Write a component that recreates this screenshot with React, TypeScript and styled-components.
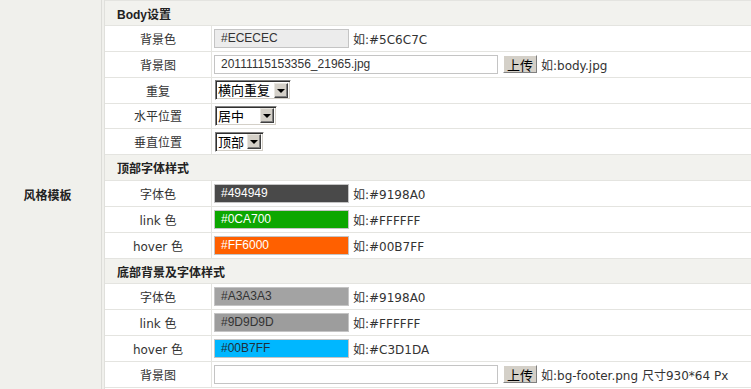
import React, { FC } from 'react';
import styled, { createGlobalStyle } from 'styled-components';

const GlobalStyle = createGlobalStyle`
  html, body {
    margin: 0;
    padding: 0;
    background: #ffffff;
    overflow: hidden;
  }
`;

type RowData =
  | { label: string; kind: 'color'; value: string; bg: string; fg: string; hint: string }
  | { label: string; kind: 'file'; value: string; hint: string }
  | { label: string; kind: 'select'; value: string; width: number };

interface SectionData {
  title: string;
  rows: RowData[];
}

const sections: SectionData[] = [
  {
    title: 'Body设置',
    rows: [
      { label: '背景色', kind: 'color', value: '#ECECEC', bg: '#ECECEC', fg: '#333333', hint: '如:#5C6C7C' },
      { label: '背景图', kind: 'file', value: '20111115153356_21965.jpg', hint: '如:body.jpg' },
      { label: '重复', kind: 'select', value: '横向重复', width: 76 },
      { label: '水平位置', kind: 'select', value: '居中', width: 62 },
      { label: '垂直位置', kind: 'select', value: '顶部', width: 49 },
    ],
  },
  {
    title: '顶部字体样式',
    rows: [
      { label: '字体色', kind: 'color', value: '#494949', bg: '#494949', fg: '#ffffff', hint: '如:#9198A0' },
      { label: 'link 色', kind: 'color', value: '#0CA700', bg: '#0CA700', fg: '#ffffff', hint: '如:#FFFFFF' },
      { label: 'hover 色', kind: 'color', value: '#FF6000', bg: '#FF6000', fg: '#ffffff', hint: '如:#00B7FF' },
    ],
  },
  {
    title: '底部背景及字体样式',
    rows: [
      { label: '字体色', kind: 'color', value: '#A3A3A3', bg: '#A3A3A3', fg: '#333333', hint: '如:#9198A0' },
      { label: 'link 色', kind: 'color', value: '#9D9D9D', bg: '#9D9D9D', fg: '#333333', hint: '如:#FFFFFF' },
      { label: 'hover 色', kind: 'color', value: '#00B7FF', bg: '#00B7FF', fg: '#1f2f3a', hint: '如:#C3D1DA' },
      { label: '背景图', kind: 'file', value: '', hint: '如:bg-footer.png 尺寸930*64 Px' },
    ],
  },
];

const ValueCell: FC<{ row: RowData }> = ({ row }) => {
  switch (row.kind) {
    case 'color':
      return (
        <Value>
          <ColorInput bg={row.bg} fg={row.fg}>{row.value}</ColorInput>
          <Hint>{row.hint}</Hint>
        </Value>
      );
    case 'file':
      return (
        <Value>
          <FileInput>{row.value}</FileInput>
          <UploadButton>上传</UploadButton>
          <Hint>{row.hint}</Hint>
        </Value>
      );
    default:
      return (
        <Value>
          <SelectBox style={{ width: row.width }}>
            <SelectText>{row.value}</SelectText>
            <ArrowButton>
              <Arrow />
            </ArrowButton>
          </SelectBox>
        </Value>
      );
  }
};

export default function App() {
  return (
    <>
      <GlobalStyle />
      <Page>
        <SideCell>风格模板</SideCell>
        <Panel>
          {sections.map((section, si) => (
            <React.Fragment key={section.title}>
              <SectionHeader first={si === 0}>{section.title}</SectionHeader>
              {section.rows.map((row, ri) => (
                <Row key={ri}>
                  <Label>{row.label}</Label>
                  <ValueCell row={row} />
                </Row>
              ))}
            </React.Fragment>
          ))}
        </Panel>
      </Page>
    </>
  );
}

const Page = styled.div`
  display: flex;
  width: 751px;
  height: 389px;
  background: #f0f0ec;
  font-family: 'DejaVu Sans', 'Noto Sans CJK SC', sans-serif;
  font-size: 12px;
  color: #333333;
`;

const SideCell = styled.div`
  width: 102px;
  flex: none;
  box-sizing: border-box;
  border-right: 1px solid #dcdcd8;
  display: flex;
  align-items: center;
  justify-content: center;
  padding-right: 6px;
  font-family: 'Liberation Sans', 'Noto Sans CJK SC', sans-serif;
  font-weight: bold;
  font-size: 12px;
  color: #222222;
`;

const Panel = styled.div`
  flex: 1;
  margin-left: 2px;
  border-left: 1px solid #e0e0dc;
  background: #ffffff;
  display: flex;
  flex-direction: column;
`;

const SectionHeader = styled.div<{ first: boolean }>`
  box-sizing: border-box;
  height: ${props => (props.first ? '26px' : '25.85px')};
  border-top: ${props => (props.first ? '1px solid #e4e4e0' : 'none')};
  border-bottom: 1px solid #e4e4e0;
  background: #f2f2ee;
  display: flex;
  align-items: center;
  padding-left: 12px;
  font-family: 'Liberation Sans', 'Noto Sans CJK SC', sans-serif;
  font-weight: bold;
  font-size: 12px;
  color: #222222;
`;

const Row = styled.div`
  box-sizing: border-box;
  height: 25.85px;
  border-bottom: 1px solid #e4e4e0;
  display: grid;
  grid-template-columns: 107px 1fr;
`;

const Label = styled.div`
  border-right: 1px solid #e4e4e0;
  display: flex;
  align-items: center;
  justify-content: center;
  color: #333333;
`;

const Value = styled.div`
  display: flex;
  align-items: center;
  padding-left: 2px;
  gap: 4px;
`;

const ColorInput = styled.div<{ bg: string; fg: string }>`
  box-sizing: border-box;
  width: 135px;
  height: 19px;
  border: 1px solid #c4c4c4;
  background: ${props => props.bg};
  color: ${props => props.fg};
  font-family: 'Liberation Sans', sans-serif;
  font-size: 12px;
  line-height: 17px;
  padding-left: 6px;
`;

const FileInput = styled.div`
  box-sizing: border-box;
  width: 284px;
  height: 19px;
  border: 1px solid #c4c4c4;
  background: #ffffff;
  color: #333333;
  font-family: 'Liberation Sans', sans-serif;
  font-size: 12px;
  line-height: 17px;
  padding-left: 6px;
  margin-right: 1px;
`;

const UploadButton = styled.div`
  box-sizing: border-box;
  width: 34px;
  height: 18px;
  background: #d4d0c8;
  border: 1px solid;
  border-color: #ffffff #808080 #808080 #ffffff;
  display: flex;
  align-items: center;
  justify-content: center;
  font-family: 'Noto Sans CJK SC', sans-serif;
  font-size: 13px;
  color: #000000;
`;

const Hint = styled.span`
  color: #333333;
  white-space: nowrap;
`;

const SelectBox = styled.div`
  box-sizing: border-box;
  height: 20px;
  margin-left: 1px;
  border: 1px solid;
  border-color: #808080 #ffffff #ffffff #808080;
  box-shadow: inset 1px 1px 0 #303030, inset -1px -1px 0 #d4d0c8;
  background: #ffffff;
  display: flex;
  align-items: center;
  justify-content: space-between;
  padding: 1px 2px 1px 2px;
`;

const SelectText = styled.span`
  font-family: 'Noto Sans CJK SC', sans-serif;
  font-size: 13px;
  line-height: 16px;
  color: #000000;
  white-space: nowrap;
`;

const ArrowButton = styled.div`
  box-sizing: border-box;
  width: 14px;
  height: 15px;
  flex: none;
  background: #d4d0c8;
  border: 1px solid;
  border-color: #e8e6e0 #404040 #404040 #e8e6e0;
  box-shadow: inset -1px -1px 0 #808080;
  display: flex;
  align-items: center;
  justify-content: center;
`;

const Arrow = styled.div`
  width: 0;
  height: 0;
  border-left: 4px solid transparent;
  border-right: 4px solid transparent;
  border-top: 4px solid #000000;
  margin-top: 1px;
`;
